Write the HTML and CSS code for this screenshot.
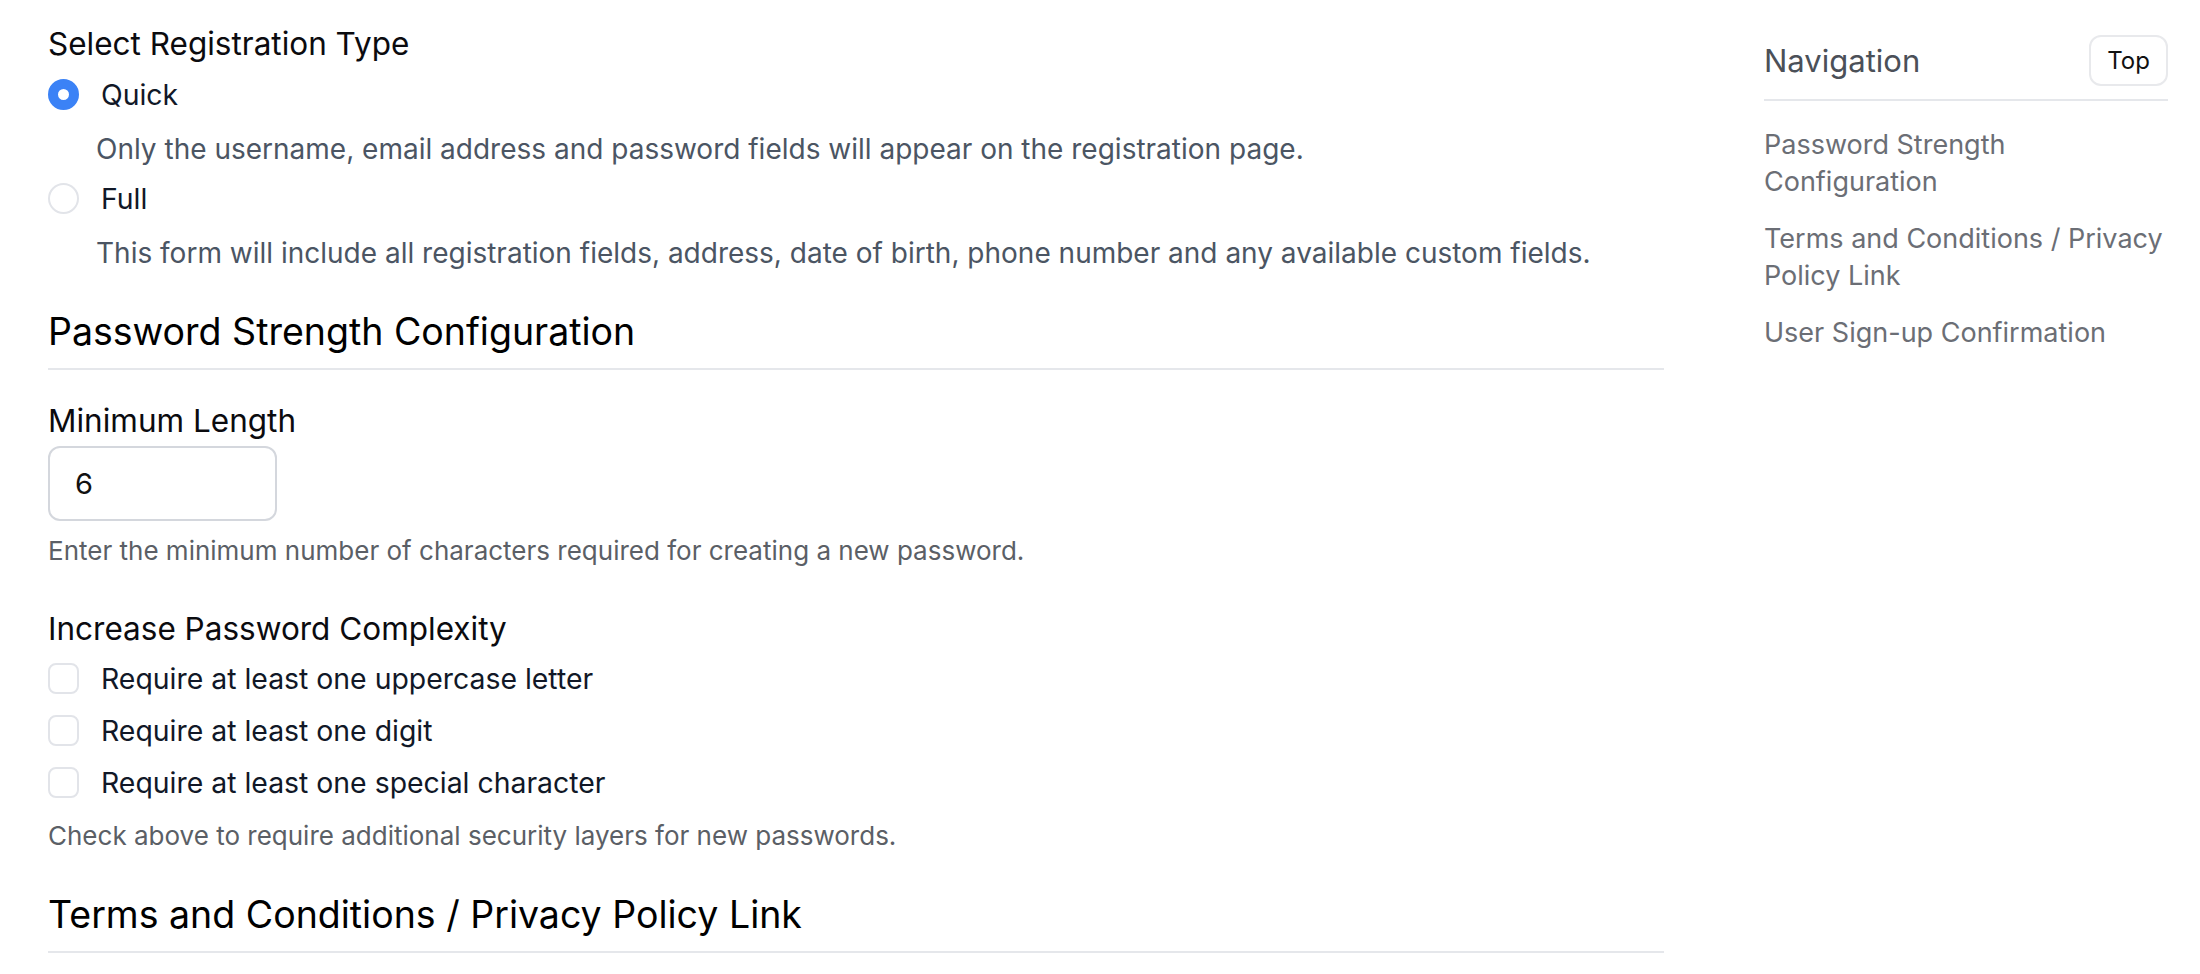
FILE: index.html
```html
<!DOCTYPE html>
<html lang="en">
<head>
<meta charset="utf-8">
<title>Registration Settings</title>
<link rel="stylesheet" href="styles.css">
</head>
<body>
<div class="page">
  <main class="main">
    <div class="field-label">Select Registration Type</div>
    <div class="option">
      <label class="row"><span class="radio checked"></span><span class="row-text">Quick</span></label>
      <p class="option-desc">Only the username, email address and password fields will appear on the registration page.</p>
    </div>
    <div class="option">
      <label class="row"><span class="radio"></span><span class="row-text">Full</span></label>
      <p class="option-desc">This form will include all registration fields, address, date of birth, phone number and any available custom fields.</p>
    </div>

    <h2 class="section-title first">Password Strength Configuration</h2>

    <div class="field-label gap-sm">Minimum Length</div>
    <div class="input">6</div>
    <p class="help">Enter the minimum number of characters required for creating a new password.</p>

    <div class="field-label gap-lg">Increase Password Complexity</div>
    <div class="checks">
      <label class="row"><span class="checkbox"></span><span class="row-text">Require at least one uppercase letter</span></label>
      <label class="row"><span class="checkbox"></span><span class="row-text">Require at least one digit</span></label>
      <label class="row"><span class="checkbox"></span><span class="row-text">Require at least one special character</span></label>
    </div>
    <p class="help help-checks">Check above to require additional security layers for new passwords.</p>

    <h2 class="section-title">Terms and Conditions / Privacy Policy Link</h2>
  </main>

  <aside class="sidebar">
    <div class="nav-head">
      <span class="nav-title">Navigation</span>
      <span class="top-btn">Top</span>
    </div>
    <nav class="nav-links">
      <a class="nav-link">Password Strength Configuration</a>
      <a class="nav-link">Terms and Conditions / Privacy Policy Link</a>
      <a class="nav-link">User Sign-up Confirmation</a>
    </nav>
  </aside>
</div>
</body>
</html>
```

FILE: styles.css
```css
html, body {
  margin: 0;
  padding: 0;
  background: #ffffff;
}
body {
  font-family: Inter, "Open Sans", "Liberation Sans", sans-serif;
  color: #111827;
}
.page {
  display: flex;
  align-items: flex-start;
  padding: 0 32px 0 48px;
}
.main {
  width: 1616px;
  flex: none;
  padding-top: 24px;
}
.field-label {
  font-size: 31.5px;
  line-height: 40px;
  color: #0b0b0f;
}
.gap-sm { margin-top: 31px; }
.gap-lg { margin-top: 40px; }

.option { margin-top: 10px; }
.option + .option { margin-top: 11px; }
.row {
  display: flex;
  align-items: center;
  height: 40px;
  gap: 22px;
}
.row-text {
  font-size: 28.4px;
  color: #111827;
}
.radio {
  width: 31px;
  height: 31px;
  box-sizing: border-box;
  border-radius: 50%;
  border: 2px solid #e2e4e9;
  background: #fff;
  flex: none;
}
.radio.checked {
  border: 10px solid #3b82f6;
}
.option-desc {
  margin: 17px 0 0 48px;
  font-size: 28px;
  line-height: 36px;
  color: #4b5563;
}
.section-title {
  margin: 37px 0 0;
  font-size: 37.5px;
  line-height: 48px;
  font-weight: 400;
  color: #000;
  padding-bottom: 12px;
  border-bottom: 2px solid #e5e7eb;
}
.input {
  margin-top: 5px;
  width: 229px;
  height: 75px;
  box-sizing: border-box;
  border: 2px solid #d4d7dd;
  border-radius: 12px;
  padding-left: 25px;
  display: flex;
  align-items: center;
  font-size: 29px;
  color: #111;
}
.help {
  margin: 12px 0 0;
  font-size: 26px;
  line-height: 36px;
  color: #5b5f66;
}
.checks {
  margin-top: 9px;
  display: flex;
  flex-direction: column;
  gap: 12px;
}
.checkbox {
  width: 31px;
  height: 31px;
  box-sizing: border-box;
  border: 2px solid #e2e4e9;
  border-radius: 8px;
  background: #fff;
  flex: none;
}
.help-checks { margin-top: 16px; }

.sidebar {
  margin-left: 100px;
  width: 404px;
  flex: none;
  padding-top: 34.5px;
}
.nav-head {
  display: flex;
  justify-content: space-between;
  align-items: center;
  padding-bottom: 13px;
  border-bottom: 2px solid #e5e7eb;
}
.nav-title {
  font-size: 31px;
  color: #4b5058;
}
.top-btn {
  width: 79px;
  height: 51px;
  box-sizing: border-box;
  border: 2px solid #e8e9ec;
  border-radius: 12px;
  display: flex;
  align-items: center;
  justify-content: center;
  font-size: 24px;
  color: #111;
  background: #fff;
}
.nav-links {
  display: flex;
  flex-direction: column;
  gap: 21px;
  padding-top: 26.5px;
}
.nav-link {
  font-size: 27px;
  line-height: 36.5px;
  color: #6b6e75;
}
```
